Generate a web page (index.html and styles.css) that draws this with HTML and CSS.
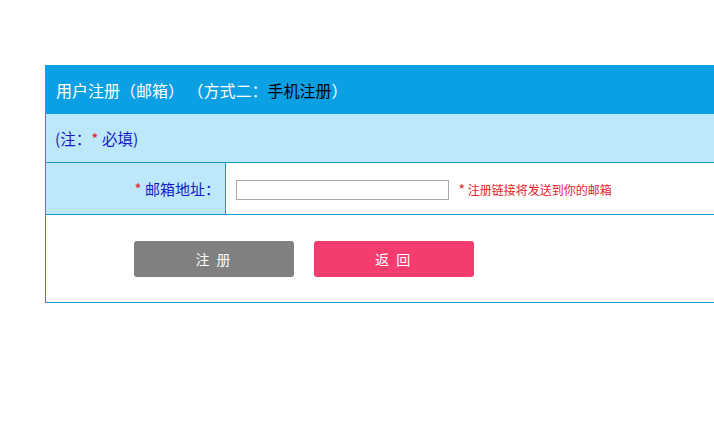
FILE: index.html
```html
<!DOCTYPE html>
<html>
<head>
  <title>用户注册</title>
  <link rel="stylesheet" href="styles.css">
</head>
<body>
  <div class="container">
    <table class="reg-table">
      <tr class="head-row">
        <td colspan="2">用户注册（邮箱） （方式二：<a href="#">手机注册</a>）</td>
      </tr>
      <tr class="note-row">
        <td colspan="2">(注：<span class="star">*</span> 必填)</td>
      </tr>
      <tr class="field-row">
        <td class="label"><span class="star">*</span> 邮箱地址：</td>
        <td class="value">
          <input type="text" class="email-input" />
          <span class="hint"><span class="hint-star">*</span> 注册链接将发送到你的邮箱</span>
        </td>
      </tr>
      <tr class="btn-row">
        <td colspan="2">
          <button class="btn btn-reg">注 册</button>
          <button class="btn btn-back">返 回</button>
        </td>
      </tr>
    </table>
  </div>
</body>
</html>
```
FILE: styles.css
```css
html, body {
  margin: 0;
  overflow: hidden;
  background: #fff;
  font-family: "Noto Sans CJK SC", "Microsoft YaHei", sans-serif;
}

.container {
  padding: 65px 0 0 45px;
}

.reg-table {
  width: 820px;
  border-collapse: collapse;
  border: 1px solid #1a9ac8;
}

.reg-table td {
  border: 1px solid #1a9ac8;
  padding: 0;
  line-height: 20px;
}

.head-row td {
  height: 47px;
  padding-left: 10px;
  background-color: #0ba0e3;
  border-color: #0ba0e3;
  color: #fff;
  font-size: 16px;
}

.head-row a {
  color: #000;
  text-decoration: none;
}

.note-row td {
  height: 48px;
  padding-left: 9px;
  background-color: #bce8fa;
  border-top-color: #bce8fa;
  color: #1a1ac8;
  font-size: 15.5px;
}

.star {
  color: #e8202c;
}

.field-row td {
  height: 51px;
}

.label {
  width: 174px;
  padding-right: 5px !important;
  text-align: right;
  background-color: #bce8fa;
  color: #1a1ac8;
  font-size: 15px;
}

.value {
  padding-left: 10px !important;
}

.email-input {
  width: 213px;
  height: 20px;
  box-sizing: border-box;
  border: 1px solid #aaa;
  margin: 0;
  vertical-align: middle;
}

.hint {
  margin-left: 6px;
  color: #e8202c;
  font-size: 12px;
  vertical-align: middle;
}

.hint-star {
  font-size: 14px;
}

.btn-row td {
  height: 87px;
  padding-left: 88px;
}

.btn {
  width: 160px;
  height: 36px;
  margin-right: 16px;
  border: none;
  border-radius: 3px;
  color: #fff;
  font-family: "Noto Sans CJK SC", sans-serif;
  font-size: 14px;
  letter-spacing: 2px;
  cursor: pointer;
}

.btn-reg {
  background-color: #808080;
}

.btn-back {
  background-color: #f53c6e;
}
```
